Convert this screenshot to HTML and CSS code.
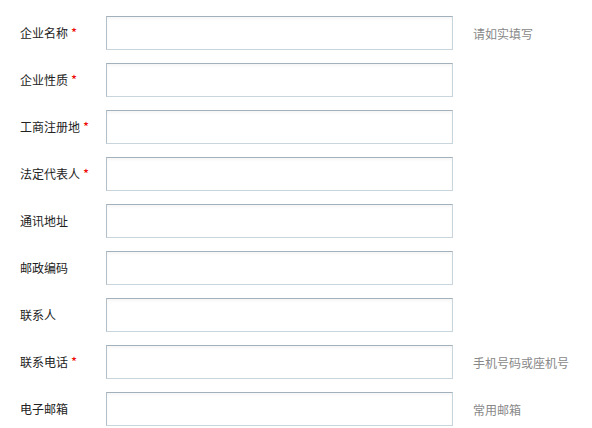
FILE: index.html
```html
<!DOCTYPE html>
<html lang="zh">
<head>
<meta charset="utf-8">
<link rel="stylesheet" href="styles.css">
</head>
<body>
<form class="form">
  <div class="row"><label class="label">企业名称<span class="req">*</span></label><input class="input" type="text"><span class="hint">请如实填写</span></div>
  <div class="row"><label class="label">企业性质<span class="req">*</span></label><input class="input" type="text"></div>
  <div class="row"><label class="label">工商注册地<span class="req">*</span></label><input class="input" type="text"></div>
  <div class="row"><label class="label">法定代表人<span class="req">*</span></label><input class="input" type="text"></div>
  <div class="row"><label class="label">通讯地址</label><input class="input" type="text"></div>
  <div class="row"><label class="label">邮政编码</label><input class="input" type="text"></div>
  <div class="row"><label class="label">联系人</label><input class="input" type="text"></div>
  <div class="row"><label class="label">联系电话<span class="req">*</span></label><input class="input" type="text"><span class="hint">手机号码或座机号</span></div>
  <div class="row"><label class="label">电子邮箱</label><input class="input" type="text"><span class="hint">常用邮箱</span></div>
</form>
</body>
</html>
```
FILE: styles.css
```css
html, body {
  margin: 0;
  padding: 0;
  background: #fff;
}
body {
  font-family: "Noto Sans CJK SC", "Liberation Sans", sans-serif;
  font-size: 12px;
  color: #222;
}
.form {
  padding: 16px 0 0 20px;
}
.row {
  display: flex;
  align-items: center;
  height: 34px;
  margin-bottom: 13px;
}
.label {
  width: 86px;
  flex: none;
  line-height: 16px;
}
.req {
  color: #e00;
  margin-left: 3px;
  font-size: 13px;
}
.input {
  box-sizing: border-box;
  width: 347px;
  height: 34px;
  margin: 0;
  padding: 0 6px;
  border: 1px solid #c9d5dd;
  border-top-color: #a3b1bc;
  border-left-color: #b3c0c9;
  background: #fff;
  box-shadow: inset 0 2px 3px rgba(0, 0, 0, 0.04);
  outline: none;
  font: inherit;
}
.hint {
  margin-left: 20px;
  color: #888;
}
```
